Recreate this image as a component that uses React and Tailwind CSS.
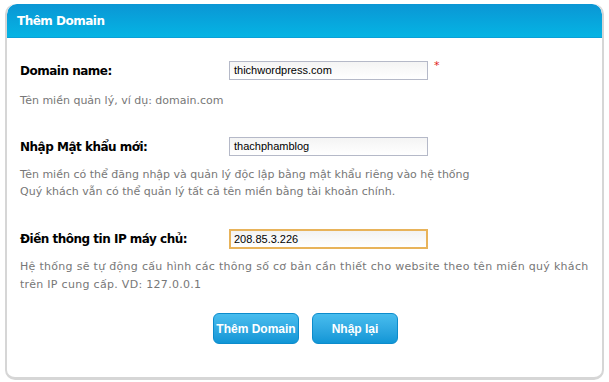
export default function App() {
  const sans = { fontFamily: '"DejaVu Sans", Verdana, sans-serif' };
  const arial = { fontFamily: '"Liberation Sans", Arial, sans-serif' };
  return (
    <div className="w-[609px] h-[382px] bg-white pt-[4px] px-[5px]" style={sans}>
      <div className="w-[599px] h-[376px] rounded-[10px] border-l-2 border-r-2 border-b-[3px] border-[#d6d6d6] bg-white flex flex-col overflow-hidden">
        <div className="h-[34px] bg-gradient-to-b from-[#0b96d4] to-[#05b4e4] border-b border-[#0aa0d8] flex items-center pl-[10px] rounded-t-[10px]">
          <span className="text-white font-bold text-[12px] tracking-[-0.5px]">Thêm Domain</span>
        </div>
        <div className="flex flex-col pl-[13px] pt-[23px]">
          <div className="flex items-center h-[19px]">
            <span className="w-[209px] font-bold text-[12px] tracking-[-0.5px] text-black">Domain name:</span>
            <div className="w-[199px] h-[19px] border border-[#b5b9c8] bg-gradient-to-b from-[#f4f4f4] to-white flex items-center px-[4px] text-[11px] text-black" style={arial}>thichwordpress.com</div>
            <span className="ml-[6px] -mt-[8px] text-[#e02020] text-[11px]">*</span>
          </div>
          <div className="mt-[12px] text-[11px] text-[#777777] leading-[17px]">Tên miền quản lý, ví dụ: domain.com</div>
          <div className="flex items-center h-[19px] mt-[28px]">
            <span className="w-[209px] font-bold text-[12px] tracking-[-0.5px] text-black">Nhập Mật khẩu mới:</span>
            <div className="w-[199px] h-[19px] border border-[#b5b9c8] bg-gradient-to-b from-[#f4f4f4] to-white flex items-center px-[4px] text-[11px] text-black" style={arial}>thachphamblog</div>
          </div>
          <div className="mt-[10px] text-[11px] text-[#777777] leading-[17px]">
            <div>Tên miền có thể đăng nhập và quản lý độc lập bằng mật khẩu riêng vào hệ thống</div>
            <div>Quý khách vẫn có thể quản lý tất cả tên miền bằng tài khoản chính.</div>
          </div>
          <div className="flex items-center h-[20px] mt-[29px]">
            <span className="w-[209px] font-bold text-[12px] tracking-[-0.5px] text-black">Điền thông tin IP máy chủ:</span>
            <div className="w-[199px] h-[20px] border-2 border-[#e8b35a] bg-gradient-to-b from-[#f2f2f2] to-white flex items-center px-[3px] text-[11px] text-black" style={arial}>208.85.3.226</div>
          </div>
          <div className="mt-[9px] text-[11px] text-[#777777] leading-[18px]">
            <div className="tracking-[0.3px]">Hệ thống sẽ tự động cấu hình các thông số cơ bản cần thiết cho website theo tên miền quý khách</div>
            <div className="tracking-[0.3px]">trên IP cung cấp. VD: 127.0.0.1</div>
          </div>
          <div className="flex gap-[13px] mt-[19px] pl-[193px]">
            <button className="w-[86px] h-[31px] rounded-[6px] border border-[#0c8ccc] bg-gradient-to-b from-[#48bdee] to-[#0f96d6] text-white font-bold text-[12px] flex items-center justify-center" style={arial}>Thêm Domain</button>
            <button className="w-[86px] h-[31px] rounded-[6px] border border-[#0c8ccc] bg-gradient-to-b from-[#48bdee] to-[#0f96d6] text-white font-bold text-[12px] flex items-center justify-center" style={arial}>Nhập lại</button>
          </div>
        </div>
      </div>
    </div>
  );
}
